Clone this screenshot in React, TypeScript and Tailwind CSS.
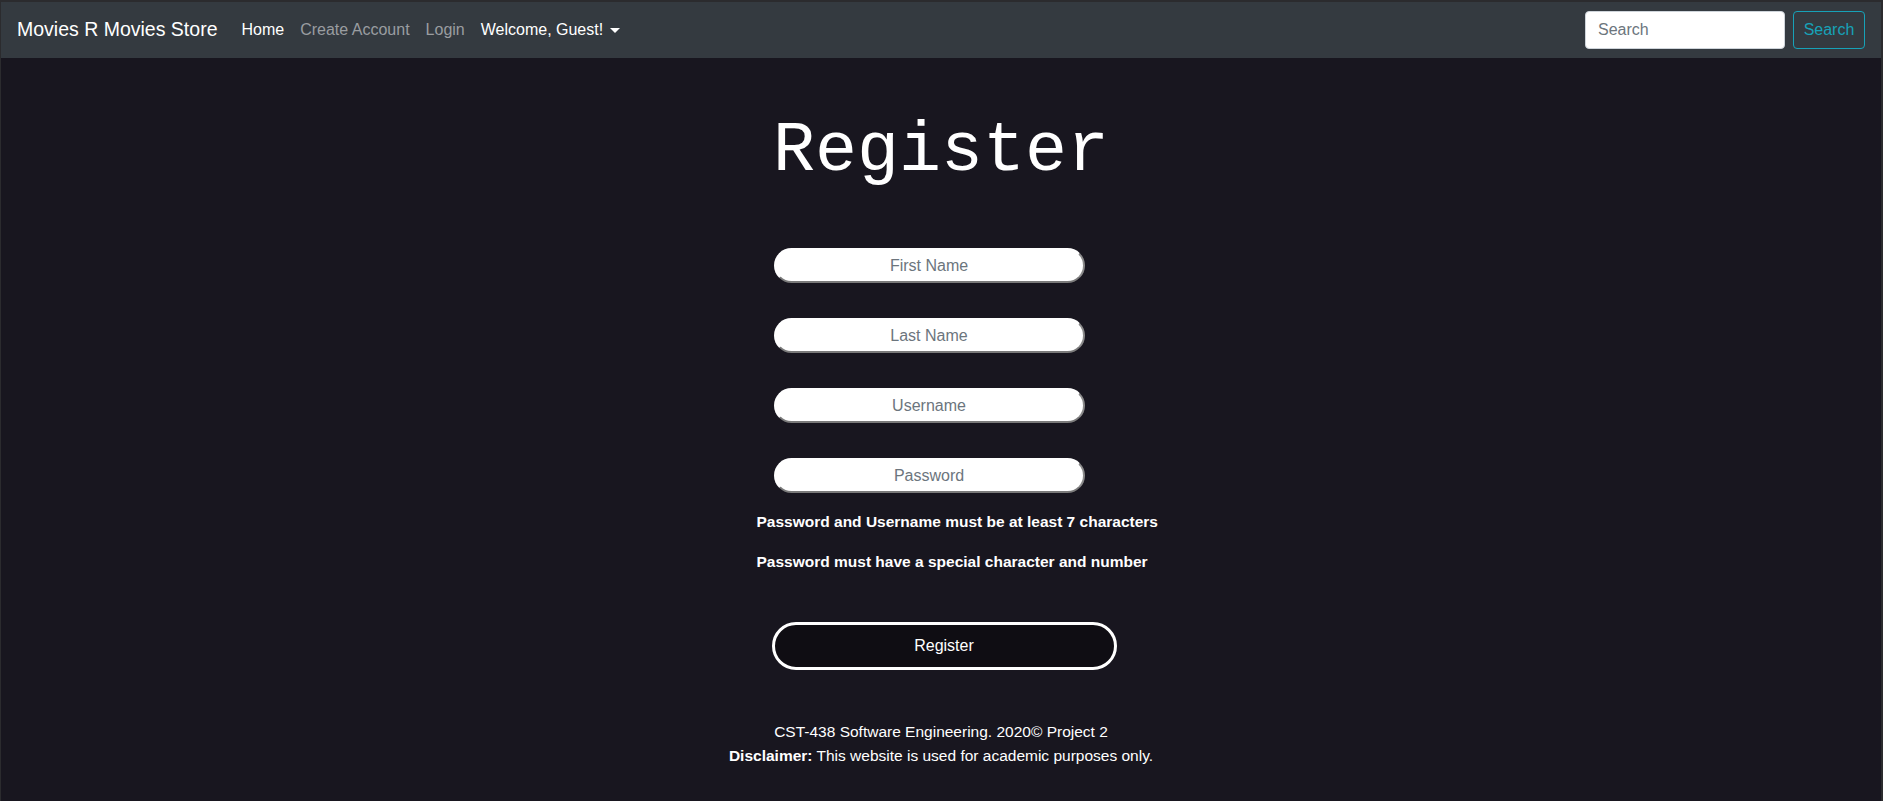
import React from 'react';

const sans = { fontFamily: '"Liberation Sans", Arial, sans-serif' };

function Field({ placeholder, type = 'text' }: { placeholder: string; type?: string }) {
  return (
    <input
      type={type}
      placeholder={placeholder}
      className="ml-[17px] block h-[35px] w-[311px] rounded-full border-2 border-white border-b-[#7a7a7a] border-r-[#8a8a8a] bg-white text-center text-[16px] text-[#495057] placeholder:text-[#6c757d] outline-none"
    />
  );
}

export default function App() {
  return (
    <div
      className="min-h-screen bg-[#18161f] border-l border-t-2 border-r-2 border-[#2b2b2e] text-white"
      style={sans}
    >
      {/* Navbar */}
      <nav className="flex h-[56px] items-center bg-[#343a40] px-4">
        <a className="mr-4 text-[19.5px] text-white">Movies R Movies Store</a>
        <ul className="flex items-center text-[16px]">
          <li className="px-2 text-white">Home</li>
          <li className="px-2 text-[#9a9da0]">Create Account</li>
          <li className="px-2 text-[#9a9da0]">Login</li>
          <li className="flex items-center px-2 text-white">
            Welcome, Guest!
            <span className="ml-[7px] inline-block h-0 w-0 border-x-[5px] border-t-[5px] border-x-transparent border-t-white" />
          </li>
        </ul>
        <form className="ml-auto flex items-center">
          <input
            placeholder="Search"
            className="mr-2 h-[38px] w-[200px] rounded border border-[#ced4da] bg-white px-3 text-[16px] text-[#495057] placeholder:text-[#6c757d] outline-none"
          />
          <button
            type="button"
            className="h-[38px] w-[72px] rounded border border-[#17a2b8] text-[16px] text-[#17a2b8]"
          >
            Search
          </button>
        </form>
      </nav>

      {/* Main */}
      <main className="flex flex-col items-center">
        <h1
          className="mt-[52px] text-[70px] leading-[1.2] text-white"
          style={{ fontFamily: '"Liberation Mono", "Courier New", monospace' }}
        >
          Register
        </h1>

        <div className="mt-[54px] w-[369px] whitespace-nowrap">
          <div className="flex flex-col gap-[35px]">
            <Field placeholder="First Name" />
            <Field placeholder="Last Name" />
            <Field placeholder="Username" />
            <Field placeholder="Password" type="password" />
          </div>

          <p className="mt-[17px] text-[15.5px] font-bold leading-6">
            Password and Username must be at least 7 characters
          </p>
          <p className="mt-4 text-[15.5px] font-bold leading-6">
            Password must have a special character and number
          </p>

          <button
            type="button"
            className="ml-[15px] mt-[48px] h-[48px] w-[345px] rounded-full border-[3px] border-white bg-[#0f0d13] text-[16px] text-white"
          >
            Register
          </button>
        </div>

        <footer className="mt-[50px] text-center text-[15.5px] leading-6">
          <p>CST-438 Software Engineering. 2020© Project 2</p>
          <p>
            <b>Disclaimer:</b> This website is used for academic purposes only.
          </p>
        </footer>
      </main>
    </div>
  );
}
